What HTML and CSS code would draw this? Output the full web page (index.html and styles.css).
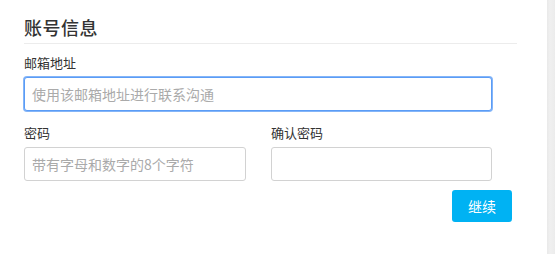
FILE: index.html
```html
<!DOCTYPE html>
<html lang="zh">
<head>
<meta charset="utf-8">
<title>账号信息</title>
<link rel="stylesheet" href="styles.css">
</head>
<body>
<div class="page">
  <main class="panel">
    <h2 class="title">账号信息</h2>
    <form class="form">
      <div class="field">
        <label class="label">邮箱地址</label>
        <input class="input input-focus" type="text" placeholder="使用该邮箱地址进行联系沟通">
      </div>
      <div class="row">
        <div class="field">
          <label class="label">密码</label>
          <input class="input" type="password" placeholder="带有字母和数字的8个字符">
        </div>
        <div class="field">
          <label class="label">确认密码</label>
          <input class="input" type="password">
        </div>
      </div>
      <div class="actions">
        <button class="btn" type="button">继续</button>
      </div>
    </form>
  </main>
  <aside class="side"></aside>
</div>
</body>
</html>
```
FILE: styles.css
```css
* { box-sizing: border-box; }
html, body { margin: 0; padding: 0; height: 100%; }
body {
  font-family: "Noto Sans CJK SC", "Noto Sans", "Liberation Sans", sans-serif;
  color: #333;
  background: #fff;
}
.page {
  display: flex;
  height: 254px;
}
.panel {
  width: 547px;
  padding: 14px 30px 0 24px;
  background: #fff;
}
.side {
  flex: 1;
  background: linear-gradient(to right, #e9e9e9, #f0f0f0 40%, #ececec);
}
.title {
  margin: 0;
  font-size: 18px;
  line-height: 26px;
  font-weight: 500;
  letter-spacing: 0.5px;
  color: #333;
  padding-bottom: 3px;
  border-bottom: 1px solid #ececec;
}
.form {
  width: 468px;
  padding-top: 10px;
}
.field {
  display: flex;
  flex-direction: column;
}
.label {
  font-size: 13px;
  line-height: 18px;
  margin-bottom: 5px;
  color: #333;
}
.input {
  height: 34px;
  width: 100%;
  border: 1px solid #d2d2d2;
  border-radius: 3px;
  padding: 0 7px;
  font-family: inherit;
  font-size: 14px;
  color: #333;
  background: #fff;
  outline: none;
}
.input::placeholder { color: #aaa; }
.input-focus {
  border-color: #5b9cf6;
  box-shadow: 0 0 0 1px rgba(91, 156, 246, 0.75);
}
.row {
  display: grid;
  grid-template-columns: 222px 221px;
  column-gap: 25px;
  margin-top: 13px;
}
.actions {
  display: flex;
  justify-content: flex-end;
  width: 488px;
  margin-top: 9px;
}
.btn {
  width: 60px;
  height: 32px;
  border: none;
  border-radius: 3px;
  background: #00b2f3;
  color: #fff;
  font-family: inherit;
  font-size: 14px;
  padding: 0;
  cursor: pointer;
}
```
